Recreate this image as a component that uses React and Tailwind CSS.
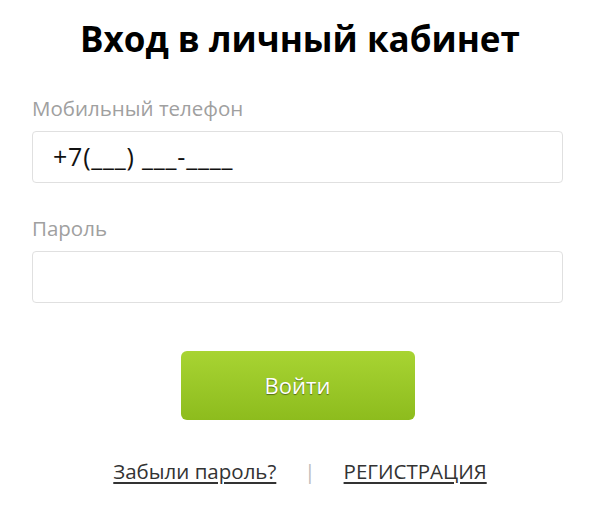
export default function App() {
  return (
    <div
      className="w-[600px] h-[517px] bg-white flex flex-col"
      style={{ fontFamily: "'Open Sans', 'Noto Sans', sans-serif" }}
    >
      <h1 className="mt-[16px] text-center text-[35px] leading-[46px] font-bold text-black">
        Вход в личный кабинет
      </h1>

      <form className="mt-[32px] pl-[32px] pr-[37px] flex flex-col">
        <label className="text-[20.5px] leading-[28px] text-[#a0a0a0]">Мобильный телефон</label>
        <div className="mt-[9px] h-[52px] border border-[#e0e0e0] rounded-[4px] flex items-center pl-[20px] text-[25px] tracking-[0.8px] text-[#111]">
          +7(___) ___-____
        </div>

        <label className="mt-[31px] text-[20.5px] leading-[28px] text-[#a0a0a0]">Пароль</label>
        <div className="mt-[9px] h-[52px] border border-[#e0e0e0] rounded-[4px]" />

        <button
          type="button"
          className="mt-[48px] self-center w-[234px] h-[69px] rounded-[6px] bg-gradient-to-b from-[#a8d432] to-[#8dbc1d] text-white text-[22px] [text-shadow:0_1px_1px_rgba(0,0,0,0.45)]"
        >
          Войти
        </button>
      </form>

      <div className="mt-[36px] flex items-center justify-center text-[20.5px] text-[#333]">
        <a href="#" className="underline underline-offset-[3px]">Забыли пароль?</a>
        <span className="mx-[28px] text-[#bbb]">|</span>
        <a href="#" className="underline underline-offset-[3px]">РЕГИСТРАЦИЯ</a>
      </div>
    </div>
  );
}
